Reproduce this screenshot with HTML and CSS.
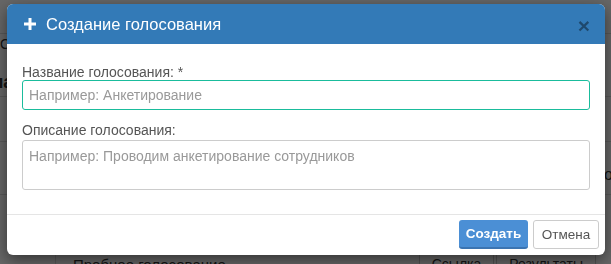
FILE: index.html
```html
<!DOCTYPE html>
<html lang="ru">
<head>
    <meta charset="UTF-8">
    <meta name="viewport" content="width=device-width, initial-scale=1.0">
    <title>Создание голосования</title>
    <link rel="stylesheet" href="styles.css">
</head>

<body>
    <!-- страница за модальным окном -->
    <div class="page">
        <div class="nav"></div>
        <div class="nav-link">Список голосований</div>
        <h2 class="page-title">Планирование</h2>
        <div class="row-line"></div>
        <div class="row-line tall"></div>
        <div class="row-line side">
            <span class="side-text">о</span>
        </div>
        <div class="vote-row">
            <div class="vote-name">Пробное голосование</div>
            <div class="vote-actions">
                <span class="page-btn">Ссылка</span>
                <span class="page-btn">Результаты</span>
            </div>
        </div>
    </div>

    <div class="backdrop">
        <div class="modal">
            <div class="modal-header">
                <svg class="plus" width="12" height="12" viewBox="0 0 12 12">
                    <rect x="4.5" y="0" width="3" height="12" fill="#fff"/>
                    <rect x="0" y="4.5" width="12" height="3" fill="#fff"/>
                </svg>
                <h4 class="modal-title">Создание голосования</h4>
                <button class="close" type="button">&times;</button>
            </div>

            <div class="modal-body">
                <div class="form-group">
                    <label for="title">Название голосования: *</label>
                    <input type="text" id="title" class="form-control active" placeholder="Например: Анкетирование">
                </div>
                <div class="form-group">
                    <label for="descr">Описание голосования:</label>
                    <textarea id="descr" class="form-control" placeholder="Например: Проводим анкетирование сотрудников"></textarea>
                </div>
            </div>

            <div class="modal-footer">
                <button class="btn btn-primary" type="button">Создать</button>
                <button class="btn btn-default" type="button">Отмена</button>
            </div>
        </div>
    </div>
</body>
</html>
```

FILE: styles.css
```css
html, body {
    margin: 0;
    height: 264px;
    overflow: hidden;
}

body {
    font-family: 'Liberation Sans', Arial, sans-serif;
    font-size: 14px;
    color: #333;
    background: #fff;
}

/* страница под затемнением */
.page {
    height: 264px;
    overflow: hidden;
}

.nav {
    height: 33px;
    border-bottom: 1px solid #ddd;
}

.nav-link {
    padding-top: 2px;
    line-height: 16px;
}

.page-title {
    margin: 20px 0 0 -21px;
    font-size: 18px;
    line-height: 20px;
}

.row-line {
    height: 4px;
    border-bottom: 1px solid #ddd;
}

.row-line.tall {
    height: 44px;
}

.row-line.side {
    height: 52px;
    text-align: right;
}

.side-text {
    display: inline-block;
    margin-top: 24px;
    margin-right: -2px;
    font-size: 16px;
}

.vote-row {
    display: flex;
    margin-top: 56px;
    margin-left: 55px;
    border-left: 1px solid #ddd;
    height: 40px;
}

.vote-name {
    flex: 1;
    padding: 5px 0 0 17px;
    font-size: 15px;
}

.vote-actions {
    display: flex;
    gap: 2px;
    margin-right: 15px;
}

.page-btn {
    padding: 4px 12px;
    border: 1px solid #ccc;
    font-size: 14px;
}

/* модальное окно */
.backdrop {
    position: fixed;
    top: 0;
    left: 0;
    right: 0;
    bottom: 0;
    background: rgba(0, 0, 0, 0.6);
}

.modal {
    width: 598px;
    margin: 4px 0 0 7px;
    background: #fff;
    border-radius: 6px;
    box-shadow: 0 5px 15px rgba(0, 0, 0, 0.5);
    overflow: hidden;
}

.modal-header {
    display: flex;
    align-items: center;
    height: 40px;
    padding: 0 15px 0 17px;
    background: #337ab7;
    color: #fff;
}

.plus {
    margin: 0 10px 1px 0;
}

.modal-title {
    flex: 1;
    margin: 0;
    font-size: 16.5px;
    font-weight: normal;
    line-height: 20px;
}

.close {
    padding: 0;
    border: none;
    background: none;
    font-family: 'Liberation Sans', Arial, sans-serif;
    font-size: 21px;
    font-weight: bold;
    line-height: 1;
    color: #000;
    opacity: 0.4;
    cursor: pointer;
    margin-top: 3px;
}

.modal-body {
    padding: 20px 15px 12px;
}

.form-group {
    margin-bottom: 12px;
}

.form-group label {
    display: block;
    line-height: 16px;
    color: #555;
}

.form-group + .form-group label {
    margin-bottom: 2px;
}

.form-control {
    display: block;
    box-sizing: border-box;
    width: 100%;
    height: 30px;
    padding: 5px 6px;
    border: 1px solid #ccc;
    border-radius: 3px;
    font-family: 'Liberation Sans', Arial, sans-serif;
    font-size: 14px;
    color: #555;
    outline: none;
}

.form-control.active {
    border-color: #1abc9c;
}

.form-control::placeholder {
    color: #999;
}

textarea.form-control {
    height: 50px;
    resize: none;
    padding-top: 7px;
}

.modal-footer {
    display: flex;
    justify-content: flex-end;
    gap: 5px;
    padding: 5px 6px 6px;
    border-top: 1px solid #e5e5e5;
}

.btn {
    box-sizing: border-box;
    height: 29px;
    padding: 0;
    border-radius: 3px;
    font-family: 'Liberation Sans', Arial, sans-serif;
    font-size: 13.5px;
    text-align: center;
    cursor: pointer;
}

.btn-primary {
    width: 69px;
    background: #4b8fd5;
    color: #fff;
    font-weight: bold;
    border: none;
    border-bottom: 2px solid #3b74b1;
}

.btn-default {
    width: 66px;
    background: #fff;
    color: #555;
    border: 1px solid #ccc;
}
```
